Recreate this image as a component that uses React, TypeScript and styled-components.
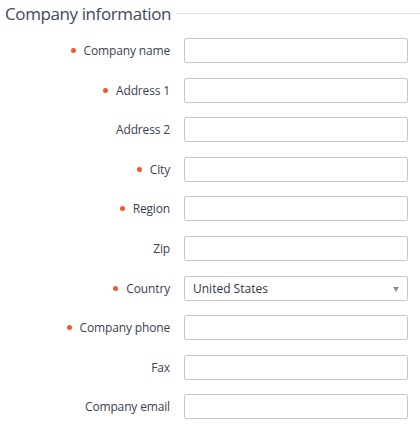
import React from 'react'
import styled, { createGlobalStyle } from 'styled-components'

const GlobalStyle = createGlobalStyle`
  body {
    margin: 0;
    background: #ffffff;
    font-family: 'Open Sans', 'Noto Sans', sans-serif;
  }
`

const Fieldset = styled.section`
  width: 420px;
  padding: 0 12px 0 5px;
  box-sizing: border-box;
`

const Legend = styled.div`
  display: flex;
  align-items: center;
  gap: 5px;
  height: 26px;
  font-size: 17px;
  letter-spacing: -0.4px;
  color: #3e4a5a;

  &::after {
    content: '';
    flex: 1;
    height: 1px;
    background: #dcdfe3;
    margin-right: -12px;
  }
`

const Rows = styled.div`
  display: flex;
  flex-direction: column;
  gap: 14.6px;
  padding-top: 12px;
`

const Row = styled.div`
  display: grid;
  grid-template-columns: 165px 1fr;
  column-gap: 14px;
  align-items: center;
`

const Label = styled.label<{ $required?: boolean }>`
  display: flex;
  justify-content: flex-end;
  align-items: center;
  gap: 8px;
  font-size: 12px;
  letter-spacing: -0.15px;
  color: #3a4150;

  &::before {
    content: '';
    display: ${(p) => (p.$required ? 'block' : 'none')};
    width: 5px;
    height: 5px;
    border-radius: 50%;
    background: #f05a28;
  }
`

const Input = styled.input`
  height: 25px;
  box-sizing: border-box;
  border: 1px solid #c4c8cf;
  border-radius: 2px;
  padding: 0 8px;
  font: inherit;
  font-size: 12px;
  outline: none;
`

const Select = styled.div`
  position: relative;
  height: 25px;
  box-sizing: border-box;
  border: 1px solid #c4c8cf;
  border-radius: 2px;
  padding: 0 8px;
  display: flex;
  align-items: center;
  font-size: 12px;
  color: #2f3542;

  &::after {
    content: '';
    position: absolute;
    right: 8px;
    top: 10px;
    border-left: 3.5px solid transparent;
    border-right: 3.5px solid transparent;
    border-top: 5px solid #8a8f97;
  }
`

const fields: { label: string; required?: boolean; select?: string }[] = [
  { label: 'Company name', required: true },
  { label: 'Address 1', required: true },
  { label: 'Address 2' },
  { label: 'City', required: true },
  { label: 'Region', required: true },
  { label: 'Zip' },
  { label: 'Country', required: true, select: 'United States' },
  { label: 'Company phone', required: true },
  { label: 'Fax' },
  { label: 'Company email' },
]

const App = () => {
  return (
    <>
      <GlobalStyle />
      <Fieldset>
        <Legend>Company information</Legend>
        <Rows>
          {fields.map((f) => (
            <Row key={f.label}>
              <Label $required={f.required}>{f.label}</Label>
              {f.select ? <Select>{f.select}</Select> : <Input type="text" />}
            </Row>
          ))}
        </Rows>
      </Fieldset>
    </>
  )
}

export default App
